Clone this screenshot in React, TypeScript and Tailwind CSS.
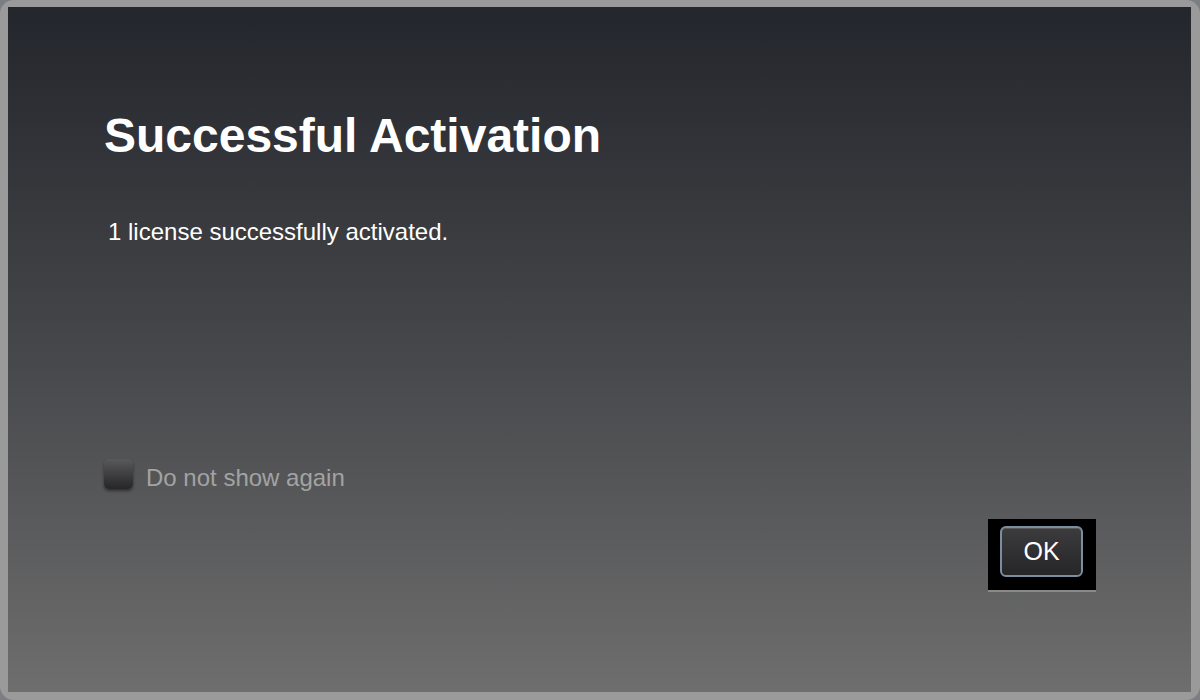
import React from 'react';

export default function App() {
  return (
    <div className="w-[1200px] h-[700px] bg-[#7d7e84] font-['Liberation_Sans',Arial,sans-serif]">
      <div className="w-full h-full rounded-[14px] bg-[#9a9a9a] pt-[7px] pl-[8px] pr-[9px] pb-[8px]">
        <div className="w-full h-full flex flex-col bg-gradient-to-b from-[#23262c] via-[#46474a] to-[#6e6e6e] px-[96px]">
          <h1 className="mt-[101px] text-[48px] leading-[56px] font-bold text-white">
            Successful Activation
          </h1>
          <p className="mt-[54px] ml-[4px] text-[24px] leading-[28px] text-white">
            1 license successfully activated.
          </p>

          <label className="mt-[213px] flex items-start gap-[13px]">
            <span className="w-[29px] h-[30px] rounded-[5px] bg-gradient-to-b from-[#5a5a5c] to-[#262628] shadow-[0_2px_3px_rgba(0,0,0,0.45)]" />
            <span className="mt-[5px] text-[24px] leading-[28px] text-[#a3a3a3]">Do not show again</span>
          </label>

          <div className="mt-[27px] flex justify-end mr-[-1px]">
            <div className="w-[108px] h-[73px] bg-black border-b-[2px] border-[#8a8a8a] pl-[12px] pt-[7px]">
              <button className="w-[83px] h-[51px] rounded-[6px] border-[2px] border-[#7c8da0] bg-gradient-to-b from-[#3c3c3e] to-[#262527] text-white text-[25px] leading-none shadow-[inset_0_1px_0_rgba(255,255,255,0.15)]">
                OK
              </button>
            </div>
          </div>
        </div>
      </div>
    </div>
  );
}
